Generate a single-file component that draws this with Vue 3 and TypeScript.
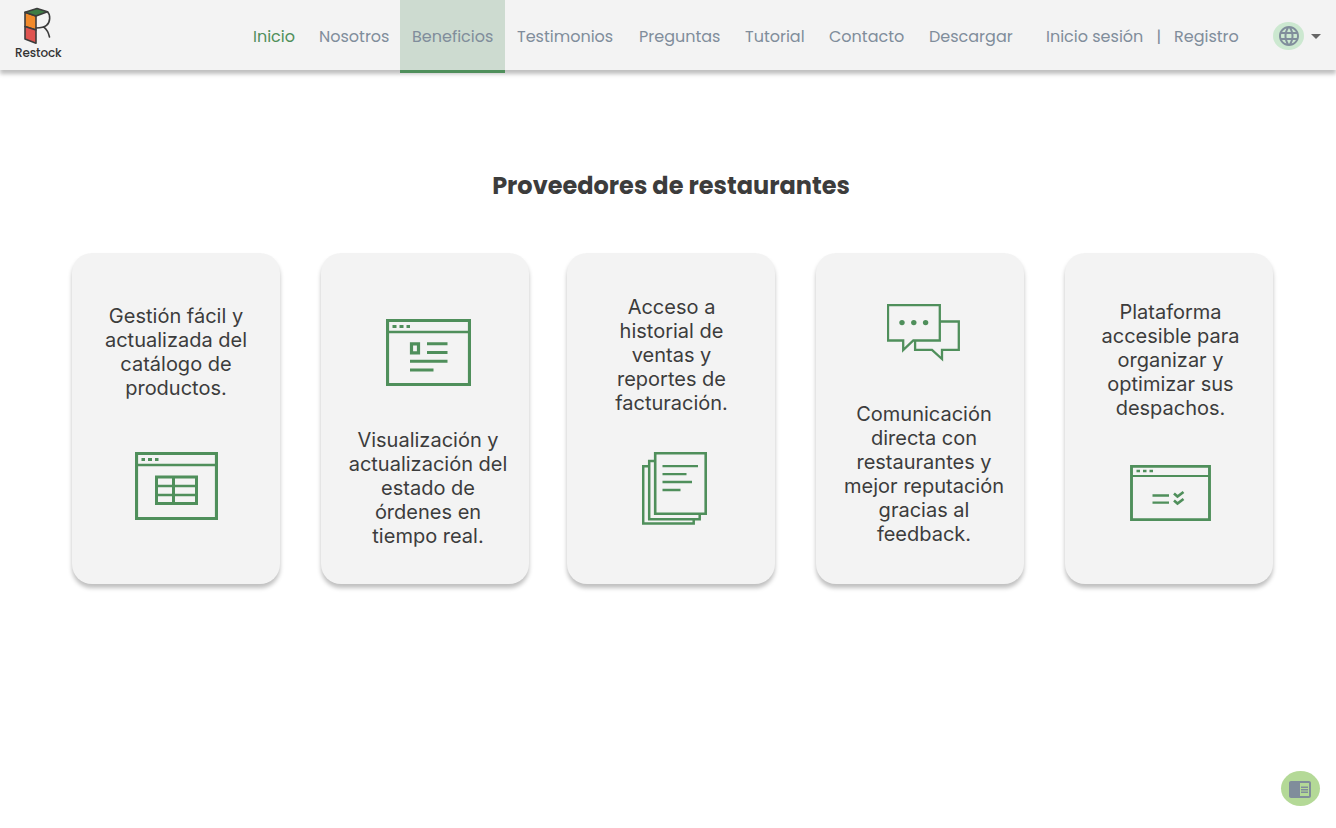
<script setup lang="ts">
interface NavItem { label: string; width: number; state?: string }
interface Card { lines: string[]; icon: string; w: number; h: number; top: number; gap: number; shift: number; iconShift: number; iconFirst: boolean }

const nav: NavItem[] = [
  { label: 'Inicio', width: 66, state: 'current' },
  { label: 'Nosotros', width: 93 },
  { label: 'Beneficios', width: 105, state: 'hover' },
  { label: 'Testimonios', width: 122 },
  { label: 'Preguntas', width: 106 },
  { label: 'Tutorial', width: 84 },
  { label: 'Contacto', width: 100 },
  { label: 'Descargar', width: 117 },
  { label: 'Inicio sesión', width: 111 },
  { label: '|', width: 17, state: 'divider' },
  { label: 'Registro', width: 80 },
]

const cards: Card[] = [
  { lines: ['Gestión fácil y', 'actualizada del', 'catálogo de', 'productos.'], icon: 'table', w: 83, h: 68, top: 51, gap: 52, shift: 0, iconShift: 0.5, iconFirst: false },
  { lines: ['Visualización y', 'actualización del', 'estado de', 'órdenes en', 'tiempo real.'], icon: 'article', w: 85, h: 67, top: 66, gap: 42, shift: 3, iconShift: 3.5, iconFirst: true },
  { lines: ['Acceso a', 'historial de', 'ventas y', 'reportes de', 'facturación.'], icon: 'reports', w: 65, h: 73, top: 42, gap: 37, shift: 0.5, iconShift: 3.5, iconFirst: false },
  { lines: ['Comunicación', 'directa con', 'restaurantes y', 'mejor reputación', 'gracias al', 'feedback.'], icon: 'chat', w: 73, h: 58, top: 51, gap: 40, shift: 4, iconShift: 3.5, iconFirst: true },
  { lines: ['Plataforma', 'accesible para', 'organizar y', 'optimizar sus', 'despachos.'], icon: 'checks', w: 81, h: 56, top: 47, gap: 45, shift: 1.5, iconShift: 1.5, iconFirst: false },
]
</script>

<template>
  <div class="page">
    <header class="topbar">
      <div class="brand">
        <svg width="30" height="38" viewBox="22 7 30 38" fill="none" stroke="#3c3c3c" stroke-width="1.6" stroke-linejoin="round" stroke-linecap="round">
          <path d="M25 12.2 36 16v14L25 26.5Z" fill="#f18a2b" />
          <path d="M25 26.5 36 30v13.3L25 39Z" fill="#df5450" />
          <path d="M25 12.2 37 8.6l10.500 3.200L36 16Z" fill="#3f7d45" />
          <path d="M47.500 11.800c3.200 3.200 2.900 10.500-1 13.600-2.600 2.100-5.800 2.500-10.300 2.600M43.800 27.200c3 2.200 4.700 5.500 5.700 9.800" />
        </svg>
        <span class="brand-name">Restock</span>
      </div>
      <nav class="nav">
        <a v-for="item in nav" :key="item.label" class="nav-item" :class="item.state" :style="{ width: item.width + 'px' }">{{ item.label }}</a>
      </nav>
      <div class="language">
        <span class="globe">
          <svg width="24" height="24" viewBox="0 0 24 24" fill="#808d9b"><path d="M11.990 2C6.470 2 2 6.480 2 12s4.470 10 9.990 10C17.520 22 22 17.520 22 12S17.520 2 11.990 2zm6.930 6h-2.950c-.32-1.250-.78-2.450-1.380-3.560 1.840.63 3.370 1.910 4.330 3.560zM12 4.040c.83 1.200 1.480 2.530 1.910 3.960h-3.820c.43-1.430 1.080-2.760 1.910-3.960zM4.260 14C4.100 13.360 4 12.690 4 12s.1-1.360.26-2h3.380c-.08.66-.14 1.320-.14 2s.06 1.340.14 2H4.260zm.82 2h2.950c.32 1.250.78 2.450 1.380 3.560-1.840-.63-3.370-1.900-4.330-3.560zm2.950-8H5.080c.96-1.660 2.490-2.930 4.330-3.560C8.810 5.550 8.350 6.750 8.030 8zM12 19.960c-.83-1.200-1.480-2.530-1.910-3.960h3.820c-.43 1.430-1.080 2.760-1.910 3.960zM14.340 14H9.660c-.09-.66-.16-1.320-.16-2s.07-1.350.16-2h4.680c.09.65.16 1.320.16 2s-.07 1.340-.16 2zm.25 5.560c.6-1.110 1.060-2.310 1.380-3.560h2.950c-.96 1.650-2.490 2.930-4.330 3.560zM16.360 14c.08-.66.14-1.320.14-2s-.06-1.340-.14-2h3.380c.16.64.26 1.310.26 2s-.1 1.360-.26 2h-3.380z" /></svg>
        </span>
        <svg class="caret" width="10" height="5" viewBox="0 0 10 5" fill="#666"><path d="M0 0h10L5 5Z" /></svg>
      </div>
    </header>

    <main>
      <h1 class="title">Proveedores de restaurantes</h1>
      <section class="cards">
        <article v-for="card in cards" :key="card.icon" class="card" :class="{ 'icon-first': card.iconFirst }" :style="{ paddingTop: card.top + 'px', gap: card.gap + 'px' }">
          <p class="copy" :style="{ marginLeft: card.shift * 2 + 'px' }">
            <span v-for="line in card.lines" :key="line">{{ line }}</span>
          </p>
          <svg class="icon" :width="card.w" :height="card.h" :viewBox="`0 0 ${card.w} ${card.h}`" :style="{ marginLeft: card.iconShift * 2 + 'px' }">
            <template v-if="card.icon === 'table'">
              <path d="M1.500 1.500h80v65h-80z" stroke-width="3.200" />
              <path d="M2 13h79" stroke-width="2.500" />
              <path d="M6.500 7.500h3.500m3 0h4m3 0h3.500" stroke-width="3" />
              <path d="M21.500 25h40v26.500h-40zM38.500 25v26.500" stroke-width="3" />
              <path d="M21.500 34h40m-40 9h40" stroke-width="2.500" />
            </template>
            <template v-else-if="card.icon === 'article'">
              <path d="M1.500 1.500h82v64h-82z" stroke-width="3.200" />
              <path d="M2 13h81" stroke-width="2.500" />
              <path d="M6.500 7.500h4m3 0h4m3 0h3.500" stroke-width="2.800" />
              <path d="M25.500 24.800h7v9h-7z" stroke-width="3.200" />
              <path d="M41 24.800h20.500M41 33.500h20.500M24 42.200h37.500M24 51h23.500" stroke-width="2.900" />
            </template>
            <template v-else-if="card.icon === 'reports'">
              <path d="M13.200 1.200h50.500v60.500H13.200z" stroke-width="2.600" />
              <path d="M12.500 9H7.200v58.300h50.500v-5M6.500 14.200H1.200v57.300h50.500V68" stroke-width="2.500" />
              <path d="M20.500 14.200H56M20.500 22.200H44.500M20.500 30H50M20.500 38H38.500" stroke-width="2.300" />
            </template>
            <template v-else-if="card.icon === 'chat'">
              <path d="M1 1.100h51.800v35.400H26.300L16.200 46V36.500H1Z" stroke-width="2.300" />
              <path d="M53 17.500h18.800v28.300H55V55l-10-9.200H28.100V37" stroke-width="2.300" />
              <g fill="#4f8f5b" stroke="none"><circle cx="15" cy="18.600" r="2.700" /><circle cx="26.800" cy="18.600" r="2.700" /><circle cx="38.600" cy="18.600" r="2.700" /></g>
            </template>
            <template v-else>
              <path d="M1.500 1.300h78v53.300h-78z" stroke-width="2.900" />
              <path d="M2 11h77" stroke-width="2.200" />
              <path d="M6.500 6h3.500m3 0h3.500m3 0H23" stroke-width="2.300" />
              <path d="M22.500 30.500H39M22.500 37.700H39" stroke-width="2.300" />
              <path d="m44 28.500 3.500 3L53.500 27M44 35.500l3.500 3L53.500 34" stroke-width="2.700" />
            </template>
          </svg>
        </article>
      </section>
    </main>

    <button class="reader" aria-label="Modo lectura">
      <svg width="24" height="24" viewBox="0 0 24 24" fill="#808d9b"><path d="M13 12h7v1.500h-7zm0-2.500h7V11h-7zm0 5h7V16h-7zM21 4H3c-1.100 0-2 .9-2 2v13c0 1.100.9 2 2 2h18c1.100 0 2-.9 2-2V6c0-1.100-.9-2-2-2zm0 15h-9V6h9v13z" /></svg>
    </button>
  </div>
</template>

<style>
body { margin: 0; background: #fff; }
</style>

<style scoped>
.page { height: 828px; overflow: hidden; font-family: Poppins, Inter, "Liberation Sans", sans-serif; }
.topbar { display: flex; height: 70px; background: #f3f3f3; box-shadow: 0 4px 4px rgba(0, 0, 0, 0.25); }
.brand { width: 241px; padding: 7px 0 0 15px; box-sizing: border-box; display: flex; flex-direction: column; align-items: flex-start; }
.brand svg { margin-left: 7px; }
.brand-name { font-size: 12px; line-height: 15px; font-weight: 500; letter-spacing: -0.1px; color: #333; }
.nav { display: flex; height: 73px; }
.nav-item { box-sizing: border-box; height: 73px; padding: 0 0 0 12px; line-height: 73px; font-size: 16px; font-weight: 400; color: #808d9b; white-space: nowrap; }
.nav-item.current { color: #4f8f5b; }
.nav-item.hover { background: #cddbd0; border-bottom: 3px solid #4f8f5b; }
.nav-item.divider { padding-left: 11.5px; }
.language { display: flex; height: 72px; align-items: center; margin-left: auto; padding-right: 15px; gap: 7px; }
.globe { display: flex; width: 31px; height: 28px; border-radius: 15.5px / 14px; background: #cce8d0; align-items: center; justify-content: center; }
.title { margin: 98px 0 0 6px; text-align: center; font-size: 24px; line-height: 36px; font-weight: 700; color: #3c3c3c; }
.cards { display: grid; grid-template-columns: 249px 246px 249px 249px 208px; padding: 49px 0 0 72px; }
.card { display: flex; flex-direction: column; align-items: center; width: 208px; height: 331px; box-sizing: border-box; border-radius: 20px; background: #f3f3f3; box-shadow: 0 4px 4px rgba(0, 0, 0, 0.25); }
.copy { margin: 0; text-align: center; font-family: Inter, "Liberation Sans", sans-serif; font-size: 20px; line-height: 24px; color: #3c3c3c; white-space: nowrap; }
.copy span { display: block; }
.icon { flex: none; fill: none; stroke: #4f8f5b; }
.icon-first .icon { order: -1; }
.reader { position: absolute; right: 16px; bottom: 22px; width: 39px; height: 35px; padding: 0; border: 0; border-radius: 19.500px / 17.500px; background: #b4d997; display: flex; align-items: center; justify-content: center; }
.reader svg { margin: 0 1px 0 0; }
</style>
